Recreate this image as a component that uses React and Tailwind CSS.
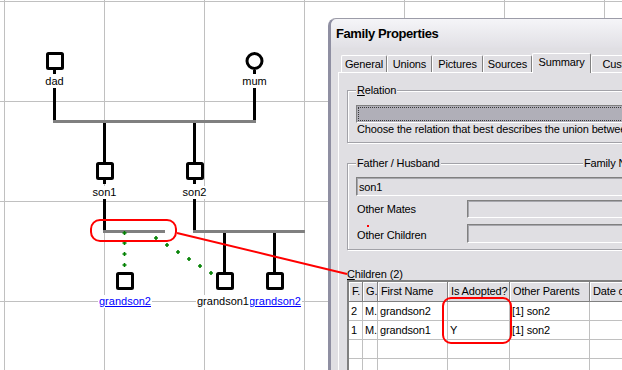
import React from "react";

const GRID_X = [4, 104, 204, 304, 404, 504, 604];
const GRID_Y = [1, 101, 201, 301];

// square person node, cx is the centre of the 3px connector line
function Male({ cx, top }) {
  return (
    <rect x={cx - 7} y={top + 1.5} width="15" height="15" rx="1" fill="white" stroke="black" strokeWidth="3" />
  );
}

function Dot({ x, y }) {
  return <path d={`M${x - 2} ${y}h4M${x} ${y - 2}v4`} stroke="#008000" strokeWidth="1.6" />;
}

function Label({ cx, top, link, children }) {
  return (
    <div
      className={`absolute -translate-x-1/2 whitespace-nowrap bg-white px-[1px] text-[11px] leading-[13px] ${
        link ? "text-[#0000ff] underline" : "text-black"
      }`}
      style={{ left: cx, top }}
    >
      {children}
    </div>
  );
}

function GroupBox({ label, className, children }) {
  return (
    <div className={`relative border border-[#a2a2a8] shadow-[inset_1px_1px_0_#fff,1px_1px_0_#fff] ${className}`}>
      <div className="absolute -top-[7px] left-[8px] whitespace-nowrap bg-[#e0dfe3] px-[1px] leading-[13px]">{label}</div>
      {children}
    </div>
  );
}

function Field({ className }) {
  return (
    <div
      className={`border border-t-[#808080] border-l-[#808080] border-b-white border-r-white shadow-[inset_1px_1px_0_#a7a7ad] ${className}`}
    />
  );
}

const tabs = [
  { name: "General", w: "w-[46px]" },
  { name: "Unions", w: "w-[45px]" },
  { name: "Pictures", w: "w-[51px]" },
  { name: "Sources", w: "w-[49px]" },
  { name: "Summary", w: "w-[59px]", active: true },
  { name: "Custom", w: "w-[60px]" },
];

const columns = [
  { name: "F.", w: "w-[14px]" },
  { name: "G.", w: "w-[15px]" },
  { name: "First Name", w: "w-[70px]" },
  { name: "Is Adopted?", w: "w-[62px]" },
  { name: "Other Parents", w: "w-[80px]" },
  { name: "Date of Birth", w: "w-[100px]" },
];

const rows = [
  ["2", "M.", "grandson2", "", "[1] son2", ""],
  ["1", "M.", "grandson1", "Y", "[1] son2", ""],
  ["", "", "", "", "", ""],
  ["", "", "", "", "", ""],
];

export default function App() {
  return (
    <div className="relative h-[370px] w-[622px] overflow-hidden bg-white font-['Liberation_Sans',Arial,sans-serif] text-[11px] text-black">
      {/* canvas: grid and pedigree lines */}
      <svg className="absolute inset-0" width="622" height="370">
        {GRID_X.map((x) => (
          <line key={"x" + x} x1={x + 0.5} y1="0" x2={x + 0.5} y2="370" stroke="#c0c0c0" />
        ))}
        {GRID_Y.map((y) => (
          <line key={"y" + y} x1="0" y1={y + 0.5} x2="622" y2={y + 0.5} stroke="#c0c0c0" />
        ))}

        {/* parents */}
        <Male cx={54.5} top={52} />
        <circle cx="254.5" cy="61" r="7.5" fill="white" stroke="black" strokeWidth="3" />
        <line x1="54.5" y1="70" x2="54.5" y2="74" stroke="black" strokeWidth="3" />
        <line x1="254.5" y1="70" x2="254.5" y2="74" stroke="black" strokeWidth="3" />
        <line x1="54.5" y1="88" x2="54.5" y2="121" stroke="black" strokeWidth="3" />
        <line x1="254.5" y1="88" x2="254.5" y2="121" stroke="black" strokeWidth="3" />
        <line x1="53" y1="121.5" x2="256" y2="121.5" stroke="#808080" strokeWidth="3" />

        {/* sons */}
        <line x1="104.5" y1="123" x2="104.5" y2="162" stroke="black" strokeWidth="3" />
        <line x1="194.5" y1="123" x2="194.5" y2="162" stroke="black" strokeWidth="3" />
        <Male cx={104.5} top={162} />
        <Male cx={194.5} top={162} />
        <line x1="104.5" y1="180" x2="104.5" y2="184" stroke="black" strokeWidth="3" />
        <line x1="194.5" y1="180" x2="194.5" y2="184" stroke="black" strokeWidth="3" />

        {/* son1 union */}
        <line x1="104.5" y1="198" x2="104.5" y2="231" stroke="black" strokeWidth="3" />
        <line x1="103" y1="231.5" x2="165" y2="231.5" stroke="#808080" strokeWidth="3" />

        {/* son2 union */}
        <line x1="194.5" y1="198" x2="194.5" y2="231" stroke="black" strokeWidth="3" />
        <line x1="193" y1="231.5" x2="305" y2="231.5" stroke="#808080" strokeWidth="3" />
        <line x1="224.5" y1="233" x2="224.5" y2="272" stroke="black" strokeWidth="3" />
        <line x1="274.5" y1="233" x2="274.5" y2="272" stroke="black" strokeWidth="3" />

        {/* grandsons */}
        <Male cx={124.5} top={272} />
        <Male cx={224.5} top={272} />
        <Male cx={274.5} top={272} />

        {/* adoption links */}
        {[233, 243, 254, 265].map((y) => (
          <Dot key={"d" + y} x={124.5} y={y} />
        ))}
        {[
          [156, 238],
          [167, 245],
          [178, 252],
          [189, 259],
          [200, 266],
          [211, 273],
        ].map(([x, y]) => (
          <Dot key={"e" + x} x={x} y={y} />
        ))}
      </svg>

      <Label cx={54.5} top={75}>dad</Label>
      <Label cx={254.5} top={75}>mum</Label>
      <Label cx={104.5} top={186}>son1</Label>
      <Label cx={194.5} top={186}>son2</Label>
      <Label cx={125} top={295} link>grandson2</Label>
      <Label cx={275} top={295} link>grandson2</Label>
      <Label cx={223} top={295}>grandson1</Label>

      {/* Family Properties window */}
      <div className="absolute left-[328px] top-[18px] h-[370px] w-[330px] rounded-tl-[8px] border-l-[3px] border-t border-l-[#8f8fa2] border-t-[#9c9ca8] bg-[#e0dfe3] tracking-[-0.15px]">
        <div className="flex h-[29px] items-center rounded-tl-[6px] bg-gradient-to-b from-[#f5f5f8] to-[#e1e0e5] pl-[5px] text-[13px] font-bold tracking-[-0.4px]">
          Family Properties
        </div>

        <div className="pl-[7px] pt-[5px]">
          {/* tabs */}
          <div className="flex h-[19px] items-end pl-[3px]">
            {tabs.map((t) =>
              t.active ? (
                <div
                  key={t.name}
                  className={`relative z-10 -mb-px flex h-[20px] ${t.w} shrink-0 items-center justify-center rounded-t-[2px] border-l border-r border-t border-l-white border-r-[#808080] border-t-white bg-[#e0dfe3] pb-[3px]`}
                >
                  {t.name}
                </div>
              ) : (
                <div
                  key={t.name}
                  className={`flex h-[17px] ${t.w} shrink-0 items-center justify-center whitespace-nowrap rounded-t-[2px] border-l border-r border-t border-l-white border-r-[#808080] border-t-white bg-[#e0dfe3]`}
                >
                  {t.name}
                </div>
              )
            )}
          </div>

          {/* tab page */}
          <div className="h-[300px] border-l border-t border-white pl-[8px] pr-[10px]">
            <GroupBox
              className="mt-[17px] h-[53px]"
              label={
                <span>
                  <span className="underline">R</span>elation
                </span>
              }
            >
              <div className="ml-[8px] mr-[8px] mt-[14px] h-[18px] border border-b-white border-l-[#808080] border-r-white border-t-[#808080] bg-[#b0afb8] p-[1px]">
                <div className="h-full border border-dotted border-[#3a3a3a]" />
              </div>
              <div className="overflow-hidden whitespace-nowrap pl-[9px] leading-[13px]">
                Choose the relation that best describes the union between the two partners
              </div>
            </GroupBox>

            <GroupBox className="mt-[20px] h-[87px]" label="Father / Husband">
              <div className="absolute -top-[7px] left-[235px] whitespace-nowrap bg-[#e0dfe3] pl-[1px] leading-[13px]">
                Family Name
              </div>
              <div className="ml-[8px] mr-[8px] mt-[13px] flex h-[19px] items-center border border-b-white border-l-[#808080] border-r-white border-t-[#808080] pl-[2px] pt-[1px] shadow-[inset_1px_1px_0_#a7a7ad]">
                son1
              </div>
              <div className="ml-[8px] mr-[8px] mt-[4px] flex h-[18px] items-center">
                <div className="w-[111px] pl-[1px] pt-[1px]">Other Mates</div>
                <Field className="h-full flex-1" />
              </div>
              <div className="ml-[8px] mr-[8px] mt-[6px] flex h-[19px] items-center">
                <div className="w-[111px] pl-[1px] pt-[3px]">Other Children</div>
                <Field className="h-full flex-1" />
              </div>
            </GroupBox>

            <div className="mt-[18px] leading-[13px]">
              <span className="underline">C</span>hildren (2)
            </div>

            {/* children list */}
            <div className="-mt-px border-l-2 border-t-2 border-[#808080] bg-white">
              <div className="flex">
                {columns.map((c) => (
                  <div
                    key={c.name}
                    className={`flex h-[20px] ${c.w} shrink-0 items-center overflow-hidden whitespace-nowrap border-b border-r border-[#808080] bg-[#e0dfe3] pl-[3px] shadow-[inset_1px_1px_0_#fff]`}
                  >
                    {c.name}
                  </div>
                ))}
              </div>
              {rows.map((r, i) => (
                <div key={i} className="flex">
                  {r.map((v, j) => (
                    <div
                      key={j}
                      className={`flex h-[19px] ${columns[j].w} shrink-0 items-center whitespace-nowrap border-b border-r border-[#c0c0c0] pl-[2px]`}
                    >
                      {v}
                    </div>
                  ))}
                </div>
              ))}
            </div>
          </div>
        </div>
      </div>

      {/* red annotations drawn over everything */}
      <svg className="pointer-events-none absolute inset-0 z-20" width="622" height="370">
        <rect x="91" y="220" width="85" height="21" rx="9" fill="none" stroke="#ff0000" strokeWidth="2" />
        <line x1="177" y1="233" x2="347" y2="274" stroke="#ff0000" strokeWidth="2" />
        <rect x="443" y="298" width="68" height="45" rx="8" fill="none" stroke="#ff0000" strokeWidth="2" />
        <rect x="367" y="225" width="2" height="2" fill="#ff0000" />
      </svg>
    </div>
  );
}
